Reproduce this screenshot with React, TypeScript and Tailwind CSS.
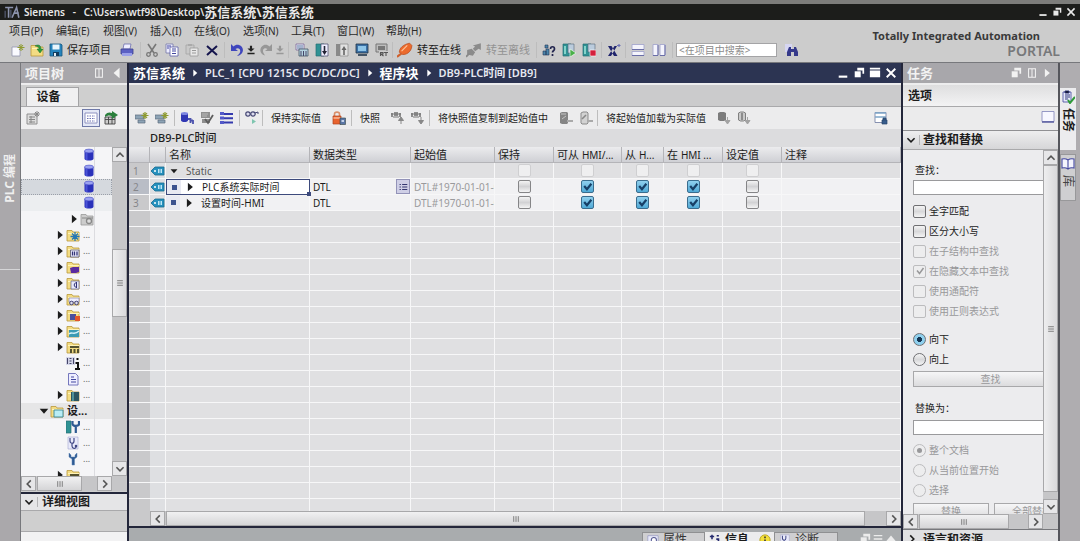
import React, { useState } from "react";

type IconProps = { name: string; className?: string };

const folder = (
  <>
    <path d="M1 2.500h5l1 1.500h6v9H1z" fill="#f3dc83" stroke="#b9983a" strokeWidth=".8" />
    <path d="M2 5.500h11" stroke="#fff3b8" />
  </>
);
const snapshot = (
  <>
    <path d="M0 2h2v4H0zM3 1h4v4H3zM8 2h2v4H8z" fill="#8f8f8f" />
    <path d="M0 3h10M2 6h6" stroke="#777" />
  </>
);
const teal = <path d="M1 1h8v12H1z" fill="#2f9294" stroke="#256d74" strokeWidth=".7" />;

const drawings: Record<string, React.ReactNode> = {
  logo: (
    <>
      <path d="M1 3h7M4 3v9M7 12l4-9 2 9M9 8h4" stroke="#8c93ad" strokeWidth="1.400" fill="none" />
      <path d="M1 12V6M6 5v7" stroke="#596078" />
    </>
  ),
  newFile: (
    <>
      <path d="M1 4h8v9H1z" fill="#fafaff" stroke="#9396ad" strokeWidth=".8" />
      <path d="M10 1v7M6.500 4.500h7M8 2l4 5M12 2L8 7" stroke="#8e9b2f" strokeWidth="1" />
    </>
  ),
  open: (
    <>
      {folder}
      <path d="M5 3c3-2 6-1 6 3h2l-3 4-3-4h2c0-2-1-3-4-3z" fill="#2d9b3c" stroke="#1b6e2a" strokeWidth=".5" />
    </>
  ),
  save: (
    <>
      <path d="M1 1h11l1 1v11H1z" fill="#2684bd" stroke="#15567f" strokeWidth=".8" />
      <path d="M3.500 1.500h7v5h-7z" fill="#e9f5fc" />
      <path d="M4 9h6v4H4z" fill="#123c5e" />
      <path d="M5 10h2v3H5z" fill="#dfeaf2" />
    </>
  ),
  print: (
    <>
      <path d="M4 1h7l-1 5H3z" fill="#eef" stroke="#6d6fae" strokeWidth=".8" />
      <path d="M1 6h12v5H1z" fill="#5b60c4" stroke="#3d4190" strokeWidth=".8" />
      <path d="M2 10h10v3H2z" fill="#9aa0e8" />
    </>
  ),
  cut: (
    <>
      <path d="M3 1l6 9M11 1L5 10" stroke="#777" strokeWidth="1.600" />
      <circle cx="3.500" cy="11.500" r="1.800" fill="none" stroke="#777" strokeWidth="1.300" />
      <circle cx="10.500" cy="11.500" r="1.800" fill="none" stroke="#777" strokeWidth="1.300" />
    </>
  ),
  copy: (
    <>
      <path d="M1 1h7v9H1z" fill="#eef" stroke="#7477a8" strokeWidth=".8" />
      <path d="M5 4h8v9H5z" fill="#fff" stroke="#5a5da8" strokeWidth=".8" />
      <path d="M2 3h4M2 5h2M7 6h4M7 8h4M7 10.500h4" stroke="#4347a0" />
    </>
  ),
  paste: (
    <>
      <path d="M1 2h8v9H1z" fill="#c9c9c9" stroke="#a5a5a5" strokeWidth=".8" />
      <path d="M5 5h8v8H5z" fill="#e7e7e7" stroke="#999" strokeWidth=".8" />
      <path d="M7 7.500h4M7 10h4M3 2h4" stroke="#999" />
    </>
  ),
  del: <path d="M2 3l10 9M12 3L2 12" stroke="#15154d" strokeWidth="2" />,
  undo: <path d="M1 1v7h7L5.500 6C9 4 12 7 9 11l-2 2c7-1 8-9 2-11-2-.5-4 0-5.500 1.500z" fill="#3f46bd" />,
  redo: <path d="M13 1v7H6l2.500-2C5 4 3 7 4.500 10L6 12.500C0 11 0 4 5 2c2-.5 4 0 5.500 1.500z" fill="#979797" />,
  drop: <path d="M2 5h10L7 9.500zM2 11h10v2H2zM5.500 1h3v5h-3z" fill="#222" />,
  dropGray: <path d="M2 5h10L7 9.500zM2 11h10v2H2zM5.500 1h3v5h-3z" fill="#999" />,
  compile: (
    <>
      <path d="M1 1h8v6H1z" fill="#dfe9f0" stroke="#648" strokeWidth=".6" />
      <path d="M2 3h6M2 5h6" stroke="#6a7cab" />
      <path d="M4 6h9v7H4z" fill="#b4d2e0" stroke="#456" strokeWidth=".8" />
      <path d="M6 8v5M8.500 8v5M11 8v5" stroke="#446" />
    </>
  ),
  download: (
    <>
      {teal}
      <path d="M6 1h7v12H6z" fill="#eef" stroke="#446" strokeWidth=".7" />
      <path d="M9.500 3v6" stroke="#223" strokeWidth="1.600" />
      <path d="M7 8h5l-2.500 4z" fill="#223" />
    </>
  ),
  upload: (
    <>
      <path d="M1 1h8v12H1z" fill="#8a8a8a" />
      <path d="M5 1h8v12H5z" fill="#e1e1e1" stroke="#888" strokeWidth=".7" />
      <path d="M9 6v6" stroke="#666" strokeWidth="1.600" />
      <path d="M6.500 7L9 3l2.500 4z" fill="#666" />
    </>
  ),
  sim: (
    <>
      <path d="M1 1h12v9H1z" fill="#3b71a6" stroke="#234" strokeWidth=".8" />
      <path d="M3 3h8v5H3z" fill="#8ec5e8" />
      <path d="M3 12h9" stroke="#456" strokeWidth="2" />
    </>
  ),
  rt: (
    <>
      <path d="M1 1h11v8H1z" fill="#bdbdbd" stroke="#777" />
      <path d="M3 3h7v4H3z" fill="#777" />
      <path d="M4 8h10v6H4z" fill="#ccc" />
      <path d="M5.500 13V9.500H8V11H6l2.500 2M9 9.500h4M11 9.500V13" stroke="#555" strokeWidth="1.100" fill="none" />
    </>
  ),
  online: (
    <>
      <path d="M2 9c0-4 4-7 9-8l2 2c0 4-3 8-8 8z" fill="#ec6a2c" stroke="#b4481a" strokeWidth=".6" />
      <path d="M4 8l5-5" stroke="#ffc59a" />
      <path d="M0 13l4-3" stroke="#d0602c" strokeWidth="1.800" />
    </>
  ),
  offline: (
    <>
      <path d="M6 3l7-2v6l-2-1-3 2-2-2 2-2zM1 7l4-1 3 3-2 3-5-1z" fill="#8b8b8b" />
      <path d="M0 13l3-3" stroke="#888" strokeWidth="1.600" />
    </>
  ),
  access: (
    <>
      <path d="M1 12V8h3v4zM4 6h3v6H4zM3 2h3v3H3z" fill="#4b86ac" stroke="#235" strokeWidth=".6" />
      <path d="M8.500 6c0-3 4-3 4 0 0 2-2 1.500-2 3.500M10.500 11v2" stroke="#23264f" strokeWidth="1.700" fill="none" />
    </>
  ),
  startCpu: (
    <>
      {teal}
      <path d="M6 1h6v9H6z" fill="#bcd" stroke="#567" strokeWidth=".6" />
      <path d="M3 3v8" stroke="#bfe" strokeWidth="1.200" />
      <path d="M8 6l6 4-6 4z" fill="#49b049" stroke="#fff" strokeWidth=".6" />
    </>
  ),
  stopCpu: (
    <>
      {teal}
      <path d="M6 1h7v8H6z" fill="#bcd" stroke="#567" strokeWidth=".6" />
      <path d="M3 3v8" stroke="#bfe" strokeWidth="1.200" />
      <path d="M8 7h6v6H8z" fill="#d4203c" stroke="#fff" strokeWidth=".6" />
    </>
  ),
  cross: (
    <>
      <path d="M1 3h3.500l6 10H7zM10 3H7.500L1 13h3z" fill="#20246d" />
      <path d="M10 2.500h3.500M12 1v3" stroke="#6a6fb5" strokeWidth="1.200" />
    </>
  ),
  splitH: (
    <>
      <path d="M1 1.500h12v5H1zM1 8.500h12v4H1z" fill="#f4f4fc" stroke="#a5a7cd" strokeWidth=".9" />
      <path d="M1 6.500h12M1 12.500h12" stroke="#6a6ea8" />
    </>
  ),
  splitV: (
    <>
      <path d="M1 1.500h5v11H1zM8 1.500h5v11H8z" fill="#f4f4fc" stroke="#a5a7cd" strokeWidth=".9" />
      <path d="M1 12.500h5M8 12.500h5M6 2v10M13 2v10" stroke="#6a6ea8" />
    </>
  ),
  binoculars: (
    <>
      <path d="M0 1h7v8H0z" fill="#d6d6f2" />
      <path d="M4 4h2v2h3V4h2l2 5v4H9V9H6v4H2V9z" fill="#35398a" />
    </>
  ),
  addRow: (
    <>
      <path d="M0 4h9v4H0zM3 9h7v3H3z" fill="#8da3b5" stroke="#5b6c7d" strokeWidth=".7" />
      <path d="M10 1v7M6.500 4.500h7M8 2l4 5M12 2L8 7" stroke="#8e9b2f" strokeWidth="1.200" />
    </>
  ),
  keep: (
    <>
      <path d="M1 2.500v7c1 2 6 2 7 0v-7z" fill="#3138b4" />
      <ellipse cx="4.500" cy="2.500" rx="3.500" ry="1.500" fill="#7d86e0" />
      <path d="M8 8h2.500v4M13 9v4M9.500 9.500H13" stroke="#4b52ad" strokeWidth="1.800" fill="none" />
    </>
  ),
  reset: (
    <>
      <path d="M1 1h9v6H1zM2 8h8v4H2z" fill="#8f8f8f" />
      <path d="M2 3h6M2 5h5" stroke="#c4c4c4" strokeWidth=".8" />
      <path d="M5 8l3 4 5-8" stroke="#5e5e5e" strokeWidth="1.800" fill="none" />
    </>
  ),
  bars: (
    <>
      <path d="M0 1h4v3H0zM0 5.500h4v3H0zM0 10h4v3H0z" fill="#5259c9" />
      <path d="M4 3h9M4 7.200h9M4 11.500h9" stroke="#343aae" strokeWidth="2" />
    </>
  ),
  glasses: (
    <>
      <circle cx="3" cy="3" r="2.200" fill="#dde" stroke="#444673" strokeWidth="1.200" />
      <circle cx="8" cy="3" r="2.200" fill="#dde" stroke="#444673" strokeWidth="1.200" />
      <path d="M10 2l3-1v2" stroke="#444673" fill="none" />
      <path d="M7 8l4 2.500L7 13z" fill="#7fc6b0" />
    </>
  ),
  lock: (
    <>
      <path d="M2.500 6V3c0-2.500 5-2.500 5 0v3" stroke="#d98f6a" strokeWidth="1.600" fill="none" />
      <path d="M1 5h8v8H1z" fill="#e8632f" stroke="#b0421c" strokeWidth=".7" />
      <path d="M1.500 6h7v2h-7z" fill="#f6a27c" />
      <path d="M8 7h5.500v6.500H8z" fill="#5a76a6" stroke="#344" strokeWidth=".6" />
      <path d="M9.500 9h2.500v2H9.500z" fill="#c4d2ea" />
    </>
  ),
  snapUp: (
    <>
      {snapshot}
      <path d="M10 13V8M7.500 9.500L10 6l2.500 3.500z" stroke="#888" fill="#888" />
    </>
  ),
  snapDown: (
    <>
      {snapshot}
      <path d="M10 6v4M7.500 9.500L10 13l2.500-3.500z" stroke="#888" fill="#888" />
    </>
  ),
  dbCopy: (
    <>
      <path d="M1 2l2-1h5l1 1v10l-1 1H3l-2-1z" fill="#858585" />
      <path d="M2 3h5M3 8l4-3" stroke="#c4c4c4" />
      <path d="M8 10h6" stroke="#aaa" strokeWidth="2" />
    </>
  ),
  dbCopyAlt: (
    <>
      <path d="M2 2l2-1h4l1 1v10l-1 1H3l-1-1z" fill="#d2d2d2" stroke="#8b8b8b" />
      <path d="M3 8l4-4" stroke="#888" strokeWidth="1.600" />
      <path d="M8 10h6" stroke="#aaa" strokeWidth="2" />
    </>
  ),
  dbLoad: (
    <>
      <path d="M1 2l2-1h4l2 1v7l-2 1H3L1 9z" fill="#7c7c7c" />
      <path d="M10.500 6v4M8 9.500l2.500 3.500L13 9.500z" stroke="#a3a3a3" fill="#a3a3a3" />
    </>
  ),
  dbLoadAlt: (
    <>
      <path d="M1.500 2l2-1h3l2 1v7l-2 1h-3l-2-1z" fill="#c9c9c9" stroke="#808080" />
      <path d="M5 2v7" stroke="#777" strokeWidth="1.500" />
      <path d="M10.500 6v4M8 9.500l2.500 3.500L13 9.500z" stroke="#a3a3a3" fill="#a3a3a3" />
    </>
  ),
  layout: (
    <>
      <path d="M1 1.500h11v10H1z" fill="#fff" stroke="#7a86a8" strokeWidth=".9" />
      <path d="M1 2h11M1 6h11" stroke="#7fa6c9" strokeWidth="1.500" />
      <path d="M8 9h5v4H8zM9 9V7h3v2" fill="#375c8c" stroke="#28456b" strokeWidth=".7" />
    </>
  ),
  pane: (
    <>
      <path d="M1 1.500h12v10H1z" fill="#f7f7ff" stroke="#8a8dc0" strokeWidth=".9" />
      <path d="M1 12h12" stroke="#5a5ea0" strokeWidth="1.500" />
    </>
  ),
  treeNew: (
    <>
      <path d="M1 3h10v10H1z" fill="#ddd" stroke="#888" strokeWidth=".9" />
      <path d="M3 6h6M3 8.500h6M3 11h6M5 5v7M11 0v6M8 3h6M9 1l4 4M13 1L9 5" stroke="#888" />
    </>
  ),
  grid: (
    <>
      <path d="M1 2h12v10H1z" fill="#fff" stroke="#8488ba" strokeWidth=".9" />
      <path d="M3 5h8M3 7.500h8M3 10h8" stroke="#6a70b4" strokeDasharray="1.500 1" />
    </>
  ),
  goto: (
    <>
      <path d="M1 6h10v7H1z" fill="#ccc" stroke="#444" strokeWidth=".9" />
      <path d="M1 8.500h10M4.500 6v7M8 6v7" stroke="#444" strokeWidth=".9" />
      <path d="M1 4c2-3 5-3 7-2V0l6 4-6 4V5.500C6 4 4 4 1 6z" fill="#2b7f3c" />
    </>
  ),
  db: (
    <>
      <path d="M2.500 3v8c1 2 8 2 9 0V3z" fill="#2a31ba" />
      <path d="M4.500 4v8" stroke="#4a53d6" strokeWidth="2" />
      <ellipse cx="7" cy="3" rx="4.500" ry="1.900" fill="#9aa1f0" stroke="#444bc4" strokeWidth=".6" />
    </>
  ),
  folderGray: (
    <>
      <path d="M1 2.500h5l1 1.500h6v9H1z" fill="#ccc" stroke="#999" strokeWidth=".8" />
      <circle cx="9" cy="9" r="2.500" fill="#ddd" stroke="#888" strokeWidth="1.300" />
      <path d="M2 6h11" stroke="#888" />
    </>
  ),
  folderStar: (
    <>
      {folder}
      <path d="M9 4v9M4.500 8.500h9M6 5.500l6 6M12 5.500l-6 6" stroke="#2677b4" strokeWidth="1.300" />
    </>
  ),
  folderBlocks: (
    <>
      {folder}
      <path d="M4.500 6H13v7H4.500z" fill="#eef" stroke="#446" strokeWidth=".7" />
      <path d="M6.500 7.500v4M8.500 7.500v4M11 7.500v4" stroke="#337" strokeWidth="1.300" />
    </>
  ),
  folderPurple: (
    <>
      {folder}
      <path d="M4 8l3-1h6v5l-3 1H5z" fill="#5a2ba0" />
    </>
  ),
  folderClass: (
    <>
      {folder}
      <path d="M5 5h8v8H5z" fill="#e6e8fa" stroke="#668" strokeWidth=".7" />
      <path d="M10.500 7c-3-1-3 5 0 4M10.500 6v6" stroke="#337" fill="none" />
    </>
  ),
  folderWatch: (
    <>
      {folder}
      <path d="M3 6h10v4H3z" fill="#eef" stroke="#77a" strokeWidth=".6" />
      <circle cx="5.500" cy="11" r="1.800" fill="#dde" stroke="#447" />
      <circle cx="10.500" cy="11" r="1.800" fill="#dde" stroke="#447" />
    </>
  ),
  folderRed: (
    <>
      {folder}
      <path d="M4 6h6v6H4z" fill="#4a4f9d" />
      <path d="M9 8h5v5H9z" fill="#e2552a" />
    </>
  ),
  folderTrace: (
    <>
      {folder}
      <path d="M3 6h10v7H3z" fill="#3c9bb4" />
      <path d="M3 10c3-3 5 2 10-3" stroke="#d8f3fb" strokeWidth="1.400" fill="none" />
    </>
  ),
  folderDevice: (
    <>
      {folder}
      <path d="M4 6h9v2H4zM4 9h2v4H4zM7.500 9h2v4h-2zM11 9h2v4h-2z" fill="#555230" />
    </>
  ),
  info: (
    <>
      <path d="M0 1h9v8H0z" fill="#d5d7ea" />
      <path d="M1.500 2v6M3.500 2.500h2M3.500 5h2M3.500 7.500h2M7.500 2v6" stroke="#446" strokeWidth="1.100" />
      <path d="M10.500 3h2M9.500 7h2.500v5M9 13h5" stroke="#111" strokeWidth="2" fill="none" />
    </>
  ),
  textList: (
    <>
      <path d="M2.500 1.500h7l2.500 2.500v9H2.500z" fill="#eef" stroke="#6669b5" strokeWidth=".9" />
      <path d="M5 5h3M5 7.500h5M5 10h5" stroke="#4347a0" strokeWidth="1.200" />
    </>
  ),
  folderModule: (
    <>
      {folder}
      <path d="M5 4h8v9H5z" fill="#2c5660" />
      <path d="M7 4v9" stroke="#59a2a8" strokeWidth="1.600" />
    </>
  ),
  folderScreen: (
    <>
      {folder}
      <path d="M4 6h9v7H4z" fill="#b9edf5" stroke="#388695" strokeWidth=".9" />
    </>
  ),
  deviceCfg: (
    <>
      <path d="M0 1h5v12H0z" fill="#2f9294" stroke="#256d74" strokeWidth=".7" />
      <path d="M6.500 1v3c0 2.500 6.500 2.500 6.500 0V1M9.800 5v8" stroke="#2e5a92" strokeWidth="2.200" fill="none" />
    </>
  ),
  diag: (
    <>
      <path d="M2 1h10v12H2z" fill="#e9eafa" stroke="#a2a5d0" strokeWidth=".6" />
      <path d="M4 2v3c0 3 4 3 4 0V2M6 7v3c0 3 4 3 4 1" stroke="#404785" strokeWidth="1.200" fill="none" />
      <circle cx="10" cy="10" r="1.300" fill="#404785" />
    </>
  ),
  wrench: <path d="M3 1v4l3 2v6h2.500V7L11 5V1L9 3v2H5V3z" fill="#2e5a92" stroke="#5d84b4" strokeWidth=".5" />,
  tag: (
    <>
      <path d="M0 7l4-4h9v8H4z" fill="#2690bd" stroke="#176b91" strokeWidth=".8" />
      <circle cx="4" cy="7" r="1" fill="#fff" />
      <path d="M7 5h4v4H7z" fill="#bfe6f5" />
      <path d="M9 5v4" stroke="#2690bd" />
    </>
  ),
  list: (
    <>
      <path d="M6 4h6M6 7h6M6 10h6" stroke="#34366f" strokeWidth="1.200" />
      <path d="M3 4h1.500M3 7h1.500M3 10h1.500" stroke="#34366f" strokeWidth="1.200" />
    </>
  ),
  taskList: (
    <>
      <path d="M2 2h8v10H2z" fill="#e6e8fa" stroke="#5257a4" strokeWidth=".9" />
      <path d="M4 1h4v2H4zM4 5h5M4 7h5M4 9h3" stroke="#33387e" />
      <path d="M7 10l2 3 5-6" stroke="#2f9b3a" strokeWidth="2" fill="none" />
    </>
  ),
  book: (
    <path d="M7 3c-2-1.500-4-1.500-6-1v9c2-.5 4-.5 6 1 2-1.500 4-1.500 6-1V2c-2-.5-4-.5-6 1zm0 0v9" fill="#f4f4fd" stroke="#4448a0" strokeWidth="1.100" />
  ),
  props: (
    <>
      <path d="M1 2h12v11H1z" fill="#e9eafa" stroke="#8a8dc0" strokeWidth=".7" />
      <circle cx="8" cy="7" r="3" fill="#fff" stroke="#55598f" strokeWidth="1.200" />
      <path d="M1 12l4-3" stroke="#55598f" strokeWidth="1.300" />
    </>
  ),
  infoMark: (
    <>
      <path d="M1 3h5M3.500 1v5M9 2h2.500" stroke="#252a6e" strokeWidth="1.800" />
      <path d="M8.500 6H11v6M8 12.500h5" stroke="#252a6e" strokeWidth="2" fill="none" />
    </>
  ),
  infoYellow: (
    <>
      <circle cx="7" cy="7" r="6" fill="#f3df3a" stroke="#b5a321" />
      <path d="M7 3v2M7 6.500V11" stroke="#333" strokeWidth="1.800" />
    </>
  ),
  min: <path d="M2 10h10v2.500H2z" fill="currentColor" />,
  restore: (
    <>
      <path d="M5 1h8v7h-2V4H5z" fill="currentColor" />
      <path d="M2 5h7v7H2z" fill="currentColor" />
    </>
  ),
  max: <path d="M1 1h12v2H1zM1 4.200h12V12H1z" fill="currentColor" />,
  close: <path d="M2 2l10 10M12 2L2 12" stroke="currentColor" strokeWidth="2.200" />,
  pinned: <path d="M3 2h8v10H3zM7 2v10" fill="none" stroke="currentColor" strokeWidth="1.200" />,
  lines: <path d="M2 3h10M2 7h10M2 11h10" stroke="currentColor" strokeWidth="1.600" />,
  triL: <path d="M10 1v12L3 7z" fill="currentColor" />,
  triR: <path d="M4 1v12l7-6z" fill="currentColor" />,
  triD: <path d="M1 4h12L7 11z" fill="currentColor" />,
  triU: <path d="M1 10h12L7 3z" fill="currentColor" />,
  chevL: <path d="M9.500 2L4.500 7l5 5" stroke="currentColor" strokeWidth="2.200" fill="none" />,
  chevR: <path d="M4.500 2l5 5-5 5" stroke="currentColor" strokeWidth="2.200" fill="none" />,
  chevU: <path d="M2 9.500l5-5 5 5" stroke="currentColor" strokeWidth="2.200" fill="none" />,
  chevD: <path d="M2 4.500l5 5 5-5" stroke="currentColor" strokeWidth="2.200" fill="none" />,
};

function Icon({ name, className = "size-3.5" }: IconProps) {
  return (
    <svg viewBox="0 0 14 14" className={`block shrink-0 ${className}`} aria-hidden="true">
      {drawings[name]}
    </svg>
  );
}

function Tool({ icon, label, className = "w-5" }: { icon: string; label: string; className?: string }) {
  return (
    <button type="button" aria-label={label} className={`flex shrink-0 items-center justify-center ${className}`}>
      <Icon name={icon} />
    </button>
  );
}

function Sep({ className = "mx-1" }: { className?: string }) {
  return <div className={`h-4 w-px shrink-0 bg-[#bdbdbd] ${className}`} />;
}

const arrowBox = "flex size-[15px] shrink-0 items-center justify-center border border-[#a8a8aa] bg-[#e6e6e8] text-[#555]";

function HScroll({ thumb }: { thumb: string }) {
  return (
    <div className="flex h-[15px] shrink-0 bg-[#c6c6c8]">
      <button type="button" aria-label="向左滚动" className={arrowBox}><Icon name="chevL" className="size-2.5" /></button>
      <div className="flex min-w-0 flex-1">
        <div className={`ml-px flex items-center justify-center border border-[#a8a8aa] bg-linear-to-b from-[#f1f1f2] to-[#d5d5d7] text-[#777] ${thumb}`}>
          <Icon name="lines" className="size-2 rotate-90" />
        </div>
      </div>
      <button type="button" aria-label="向右滚动" className={arrowBox}><Icon name="chevR" className="size-2.5" /></button>
    </div>
  );
}

function VScroll({ before, thumb }: { before: string; thumb: string }) {
  return (
    <div className="flex w-[15px] shrink-0 flex-col bg-[#c6c6c8]">
      <button type="button" aria-label="向上滚动" className={arrowBox}><Icon name="chevU" className="size-2.5" /></button>
      <div className="flex min-h-0 flex-1 flex-col">
        <div className={before} />
        <div className={`flex items-center justify-center border border-[#a8a8aa] bg-linear-to-r from-[#eeeeef] to-[#d9d9db] text-[#777] ${thumb}`}>
          <Icon name="lines" className="size-2" />
        </div>
      </div>
      <button type="button" aria-label="向下滚动" className={arrowBox}><Icon name="chevD" className="size-2.5" /></button>
    </div>
  );
}

const menus: [string, string, string][] = [
  ["项目", "(P)", "w-[47px]"],
  ["编辑", "(E)", "w-[47px]"],
  ["视图", "(V)", "w-[47px]"],
  ["插入", "(I)", "w-11"],
  ["在线", "(O)", "w-[49px]"],
  ["选项", "(N)", "w-12"],
  ["工具", "(T)", "w-[46px]"],
  ["窗口", "(W)", "w-[49px]"],
  ["帮助", "(H)", "w-[47px]"],
];

function Header() {
  return (
    <header className="shrink-0 border-b border-[#77787c] bg-[#cccccc]">
      <div className="flex justify-between">
        <div className="min-w-0">
          <nav className="flex h-[21px] items-center pl-[9px]">
            {menus.map(([t, k, w]) => (
              <button type="button" key={t} className={`shrink-0 text-left whitespace-nowrap text-[#2a2a2a] ${w}`}>
                {t}<span className="text-[10px]">{k}</span>
              </button>
            ))}
          </nav>
          <div className="flex h-[21px] items-center pb-1 pl-2">
            <Tool icon="newFile" label="新建项目" className="w-[19px]" />
            <Tool icon="open" label="打开项目" className="w-[19px]" />
            <button type="button" className="flex shrink-0 items-center gap-1 pl-[3px] whitespace-nowrap">
              <Icon name="save" />保存项目
            </button>
            <Tool icon="print" label="打印" className="ml-1.5 w-5" />
            <Sep className="ml-[3px]" />
            <Tool icon="cut" label="剪切" className="w-[21px]" />
            <Tool icon="copy" label="复制" />
            <Tool icon="paste" label="粘贴" />
            <Tool icon="del" label="删除" />
            <Sep className="mx-0.5" />
            <Tool icon="undo" label="撤消" className="w-[19px]" />
            <button type="button" aria-label="撤消列表" className="w-2.5"><Icon name="drop" className="size-2.5" /></button>
            <Tool icon="redo" label="重做" className="w-[19px]" />
            <button type="button" aria-label="重做列表" className="w-2.5"><Icon name="dropGray" className="size-2.5" /></button>
            <Sep className="mx-[3px]" />
            <Tool icon="compile" label="编译" />
            <Tool icon="download" label="下载" />
            <Tool icon="upload" label="上传" />
            <Tool icon="sim" label="启动仿真" />
            <Tool icon="rt" label="启动运行系统" />
            <Sep className="mr-px" />
            <button type="button" className="flex shrink-0 items-center gap-1 pl-[3px] whitespace-nowrap"><Icon name="online" className="size-4" />转至在线</button>
            <button type="button" className="flex shrink-0 items-center gap-1 pl-[5px] whitespace-nowrap text-[#939393]"><Icon name="offline" className="size-4" />转至离线</button>
            <Sep className="mr-0.5 ml-[6px]" />
            <Tool icon="access" label="可访问的设备" />
            <Tool icon="startCpu" label="启动 CPU" />
            <Tool icon="stopCpu" label="停止 CPU" />
            <Sep className="mx-0.5" />
            <Tool icon="cross" label="交叉引用" />
            <Sep className="mx-px" />
            <Tool icon="splitH" label="水平拆分" className="w-[21px]" />
            <Tool icon="splitV" label="垂直拆分" className="w-[21px]" />
            <Sep className="mx-[3px]" />
            <input aria-label="在项目中搜索" placeholder="<在项目中搜索>" className="h-3.5 w-[101px] shrink-0 border border-[#a4a4a6] bg-white pl-0.5 text-[10px] placeholder:text-[#8b8b8b]" />
            <Tool icon="binoculars" label="搜索" className="ml-[5px] w-5" />
          </div>
        </div>
        <div className="flex shrink-0 flex-col items-end pt-2 pr-5">
          <div className="mr-5 text-[11px] leading-[16px] font-bold whitespace-nowrap text-[#3a3a3a]">Totally Integrated Automation</div>
          <div className="text-[14px] leading-[14px] font-semibold text-[#77787a]">PORTAL</div>
        </div>
      </div>
    </header>
  );
}

type TreeRow = { icon: string; indent: string; arrow?: string; text?: string; tone?: string; strong?: boolean };

const treeRows: TreeRow[] = [
  { icon: "db", indent: "pl-[61px]" },
  { icon: "db", indent: "pl-[61px]" },
  { icon: "db", indent: "pl-[61px]", tone: "bg-[#d5d9de] outline-1 -outline-offset-1 outline-dotted outline-[#9a9fa8]" },
  { icon: "db", indent: "pl-[61px]", tone: "bg-[#eceef0]" },
  { icon: "folderGray", indent: "pl-12", arrow: "triR" },
  { icon: "folderStar", indent: "pl-[34px]", arrow: "triR", text: "..." },
  { icon: "folderBlocks", indent: "pl-[34px]", arrow: "triR", text: "..." },
  { icon: "folderPurple", indent: "pl-[34px]", arrow: "triR", text: "..." },
  { icon: "folderClass", indent: "pl-[34px]", arrow: "triR", text: "..." },
  { icon: "folderWatch", indent: "pl-[34px]", arrow: "triR", text: "..." },
  { icon: "folderRed", indent: "pl-[34px]", arrow: "triR", text: "..." },
  { icon: "folderTrace", indent: "pl-[34px]", arrow: "triR", text: "..." },
  { icon: "folderDevice", indent: "pl-[34px]", arrow: "triR", text: "..." },
  { icon: "info", indent: "pl-[45px]", text: "..." },
  { icon: "textList", indent: "pl-[45px]", text: "..." },
  { icon: "folderModule", indent: "pl-[34px]", arrow: "triR", text: "..." },
  { icon: "folderScreen", indent: "pl-[18px]", arrow: "triD", text: "设...", tone: "bg-[#e6e6e7]", strong: true },
  { icon: "deviceCfg", indent: "pl-[45px]", text: "..." },
  { icon: "diag", indent: "pl-[45px]", text: "..." },
  { icon: "wrench", indent: "pl-[45px]", text: "..." },
  { icon: "folderDevice", indent: "pl-[34px]", arrow: "triR", text: "..." },
];

const sideTitle = "flex h-5 shrink-0 items-center bg-[#a8a7ab] text-[13px] font-bold text-[#f2f2f2]";

function ProjectTree() {
  return (
    <aside className="flex w-[109px] shrink-0 flex-col border-r-2 border-l border-r-[#23263a] border-l-[#77787c] bg-[#cfcfcf]">
      <div className={`${sideTitle} pr-1 pl-1`}>
        <h2 className="flex-1">项目树</h2>
        <button type="button" aria-label="自动折叠"><Icon name="pinned" className="size-3" /></button>
        <button type="button" aria-label="折叠" className="ml-1.5"><Icon name="triL" className="size-3" /></button>
      </div>
      <div className="flex h-6 shrink-0 items-end border-t-2 border-b border-t-[#ededee] border-b-[#a9a9ab] pl-[5px]">
        <button type="button" className="h-[19px] w-[53px] border border-b-0 border-[#a3a3a5] bg-[#f0f0f1] pr-2 text-[12px] font-bold">设备</button>
      </div>
      <div className="flex h-[22px] shrink-0 items-center bg-[#efeff0] pl-1">
        <Tool icon="treeNew" label="添加新设备" className="w-4" />
        <button type="button" aria-label="显示列" className="ml-[41px] flex size-[18px] items-center justify-center border border-[#6f79a8] bg-[#e4e8f6]"><Icon name="grid" /></button>
        <Tool icon="goto" label="在编辑器中显示" className="ml-px w-5" />
      </div>
      <div className="h-[18px] shrink-0 bg-[#c5c5c7]" />
      <div className="flex min-h-0 flex-1">
        <ul className="min-w-0 flex-1 overflow-hidden bg-[#f5f5f7]">
          {treeRows.map((r, i) => (
            <li key={i} className={`flex h-4 ${r.tone ?? ""}`}>
              <div className={`flex w-[74px] shrink-0 items-center gap-px border-r border-[#dcdce0] ${r.indent}`}>
                {r.arrow && <Icon name={r.arrow} className="size-2.5" />}
                <Icon name={r.icon} />
                {r.text && <span className={r.strong ? "pl-0.5 font-bold" : "pl-0.5 text-[9px] text-[#666]"}>{r.text}</span>}
              </div>
            </li>
          ))}
        </ul>
        <VScroll before="h-[29%]" thumb="h-[23%]" />
      </div>
      <div className="flex h-[15px] shrink-0 bg-[#c6c6c8]">
        <div className="min-w-0 flex-1"><HScroll thumb="w-[74%]" /></div>
        <div className="w-[15px]" />
      </div>
      <div className="mt-px flex h-[19px] shrink-0 items-center border-t-2 border-b border-t-[#23263a] border-b-[#a9a9ab] bg-[#e5e5e7]">
        <button type="button" aria-label="展开详细视图" className="flex w-[17px] justify-center border-r border-[#b5b5b7]"><Icon name="chevD" className="size-2.5" /></button>
        <h2 className="pl-1 text-[12px] font-bold">详细视图</h2>
      </div>
      <div className="h-[21px] shrink-0 border-b border-[#a9a9ab] bg-[#cfcfcf]" />
      <div className="h-[9px] shrink-0 bg-[#f2f2f3]" />
    </aside>
  );
}

function CellCheck({ initial, faint, label }: { initial: boolean; faint?: boolean; label: string }) {
  const [on, setOn] = useState(initial);
  const tone = faint
    ? "border-[#cfcfd1] bg-[#efeff0]"
    : on
      ? "border-[#3a6d8e] bg-linear-to-b from-[#8fd0ee] to-[#4fa9d6]"
      : "border-[#858587] bg-linear-to-b from-[#f4f4f4] via-[#d2d2d4] to-[#f4f4f4]";
  return (
    <label className={`relative mx-auto block size-[13px] rounded-[2px] border ${tone}`}>
      <input type="checkbox" aria-label={label} disabled={faint} checked={on} onChange={() => setOn(!on)} className="absolute inset-0 m-0 size-full appearance-none" />
      {on && <svg viewBox="0 0 10 10" className="size-[11px]"><path d="M2 4.500l2.500 3L8.500 2.500" fill="none" stroke="#173f66" strokeWidth="2" /></svg>}
    </label>
  );
}

const columns = ["名称", "数据类型", "起始值", "保持", "可从 HMI/...", "从 H...", "在 HMI ...", "设定值", "注释"];
const flags = [false, true, true, true, false];

const rows = [
  { name: "Static", type: "", start: "", root: true },
  { name: "PLC系统实际时间", type: "DTL", start: "DTL#1970-01-01-00:00:00", root: false },
  { name: "设置时间-HMI", type: "DTL", start: "DTL#1970-01-01-00:00:00", root: false },
];

const cell = "h-4 overflow-hidden border-r border-b border-[#f7f7f8] p-0 whitespace-nowrap";

function DataTable() {
  return (
    <table className="w-full table-fixed border-separate border-spacing-0">
      <colgroup>
        <col className="w-[21px]" /><col className="w-4" /><col className="w-36" /><col className="w-[101px]" /><col className="w-[84px]" />
        <col className="w-[59px]" /><col className="w-[68px]" /><col className="w-[42px]" /><col className="w-[59px]" /><col className="w-[59px]" /><col />
      </colgroup>
      <thead>
        <tr className="bg-linear-to-b from-[#ececee] to-[#cdced3]">
          {["", "", ...columns].map((c, i) => (
            <th key={i} scope="col" className="h-4 overflow-hidden border-r border-b border-[#b4b4b8] p-0 pl-[3px] text-left font-normal whitespace-nowrap">
              {c.split(/(HMI.*|H\.\.\.)/).map((p, j) => (j % 2 ? <span key={j} className="text-[10px]">{p}</span> : p))}
            </th>
          ))}
        </tr>
      </thead>
      <tbody>
        {rows.map((r, i) => (
          <tr key={r.name} className={r.root ? "bg-[#e0e0e2]" : "bg-[#f1f1f3]"}>
            <td className={`${cell} pl-1 text-[10px] text-[#86868a] ${i === 1 ? "bg-[#b9bdc6]" : "bg-[#c9c9cb]"}`}>{i + 1}</td>
            <td className={`${cell} bg-[#dedfe2]`}><Icon name="tag" className="ml-px size-3.5" /></td>
            <td className={i === 1 ? "relative h-4 border border-[#3d4a7c] bg-white p-0 whitespace-nowrap" : cell}>
              {r.root ? (
                <div className="flex items-center pl-1"><Icon name="triD" className="size-2" /><span className="pl-2 text-[10px] text-[#555]">{r.name}</span></div>
              ) : (
                <div className="flex h-3.5 items-center">
                  <span className="flex h-full w-3.5 shrink-0 items-center justify-center bg-[#e8e9f2]"><span className="size-[5px] bg-[#3d5390]" /></span>
                  <Icon name="triR" className="ml-1 size-2.5" />
                  <span className="pl-[7px] text-[10px]">{r.name}</span>
                </div>
              )}
              {i === 1 && <span className="absolute -right-0.5 -bottom-0.5 size-1 bg-[#3d4a7c]" />}
            </td>
            <td className={cell}>
              <div className="flex items-center justify-between pl-[3px] text-[10px]">
                {r.type}
                {i === 1 && <button type="button" aria-label="选择数据类型" className="flex h-[15px] w-3.5 items-center justify-center border border-[#9393b8] bg-[#cfcfe6]"><Icon name="list" className="size-3" /></button>}
              </div>
            </td>
            <td className={`${cell} pl-[3px] text-[10px] text-[#9a9a9c]`}>{r.start}</td>
            {flags.map((f, j) => (
              <td key={j} className={cell}><CellCheck initial={f && !r.root} faint={r.root} label={`${r.name} ${columns[j + 3]}`} /></td>
            ))}
            <td className={cell} />
          </tr>
        ))}
        {Array.from({ length: 40 }, (_, i) => (
          <tr key={i} className="bg-[#e0e0e2]">
            <td className={`${cell} border-r-0 bg-[#c9c9cb]`} />
            <td className={`${cell} bg-[#dedfe2]`} />
            {columns.map((c) => <td key={c} className={cell} />)}
          </tr>
        ))}
      </tbody>
    </table>
  );
}

const crumbs = ["苏信系统", "PLC_1 [CPU 1215C DC/DC/DC]", "程序块", "DB9-PLC时间 [DB9]"];

function Editor() {
  return (
    <main className="flex min-w-0 flex-1 flex-col bg-[#dcdcde]">
      <div className="flex h-5 shrink-0 items-center bg-[#2c3452] pr-1 pl-1 text-white">
        <div className="flex min-w-0 flex-1 items-center whitespace-nowrap">
          {crumbs.map((c, i) => (
            <React.Fragment key={c}>
              {i > 0 && <Icon name="triR" className="mx-[6px] size-2" />}
              <a href="#" className={i % 2 ? "text-[11px] font-semibold text-[#e6e8f0]" : "text-[13px] font-bold"}>{c}</a>
            </React.Fragment>
          ))}
        </div>
        <div className="flex gap-1">
          <button type="button" aria-label="最小化"><Icon name="min" className="size-3" /></button>
          <button type="button" aria-label="还原"><Icon name="restore" className="size-3" /></button>
          <button type="button" aria-label="最大化"><Icon name="max" className="size-3" /></button>
          <button type="button" aria-label="关闭"><Icon name="close" className="size-3" /></button>
        </div>
      </div>
      <div className="h-6 shrink-0 border-t-2 border-b border-t-[#ededee] border-b-[#a9a9ab] bg-[#cbcbcc]" />
      <div className="flex h-[22px] shrink-0 items-center bg-[#ececed] pl-[3px] text-[10px] whitespace-nowrap">
        <Tool icon="addRow" label="插入行" />
        <Tool icon="addRow" label="添加行" />
        <Sep className="mx-0.5" />
        <Tool icon="keep" label="保持" />
        <Tool icon="reset" label="复位起始值" />
        <Tool icon="bars" label="扩展模式" />
        <Sep className="mx-0.5" />
        <Tool icon="glasses" label="全部监视" />
        <Sep className="mr-2" />
        <button type="button">保持实际值</button>
        <Tool icon="lock" label="锁定" className="ml-2 w-5" />
        <Sep className="mr-2 ml-0.5" />
        <button type="button">快照</button>
        <Tool icon="snapUp" label="上传快照" className="ml-2 w-5" />
        <Tool icon="snapDown" label="下载快照" />
        <Sep className="mr-2 ml-px" />
        <button type="button">将快照值复制到起始值中</button>
        <Tool icon="dbCopy" label="复制全部值" className="ml-2 w-5" />
        <Tool icon="dbCopyAlt" label="复制保持值" />
        <Sep className="mr-2 ml-px" />
        <button type="button">将起始值加载为实际值</button>
        <Tool icon="dbLoad" label="加载全部" className="ml-2 w-5" />
        <Tool icon="dbLoadAlt" label="加载保持" />
        <Tool icon="layout" label="布局" className="mr-2.5 ml-auto w-5" />
      </div>
      <h1 className="h-[18px] shrink-0 pl-[21px] leading-[18px] font-medium">DB9-PLC时间</h1>
      <div className="min-h-0 flex-1 overflow-hidden"><DataTable /></div>
      <div className="shrink-0 border-b-2 border-[#23263a] bg-[#c9c9cb] pl-[21px]"><HScroll thumb="w-[97%]" /></div>
      <div className="flex h-[13px] shrink-0 items-start justify-end overflow-hidden bg-[#a9acae] pt-1 pr-1 leading-[16px] whitespace-nowrap">
        <button type="button" className="flex h-4 w-[63px] shrink-0 items-center gap-1 border border-[#8f9092] bg-[#cfcfd1] pl-1 text-[12px] text-[#333]"><Icon name="props" className="size-3" />属性</button>
        <button type="button" className="flex h-4 w-[69px] shrink-0 items-center gap-1 bg-[#ececed] pl-1 text-[12px] font-bold"><Icon name="infoMark" className="size-3" />信息<Icon name="infoYellow" className="ml-1.5 size-3" /></button>
        <button type="button" className="flex h-4 w-16 shrink-0 items-center gap-1 border border-[#8f9092] bg-[#cfcfd1] pl-1 text-[12px] text-[#333]"><Icon name="diag" className="size-3" />诊断</button>
        <div className="flex gap-px pt-px pl-2 text-[#ececec]">
          <Icon name="min" className="size-3" /><Icon name="restore" className="size-3" /><Icon name="lines" className="size-3" /><Icon name="triU" className="size-3" />
        </div>
      </div>
    </main>
  );
}

function Choice({ type, name, text, off, checked }: { type: "checkbox" | "radio"; name: string; text: string; off?: boolean; checked?: boolean }) {
  const round = type === "radio" ? "rounded-full checked:bg-[radial-gradient(circle,#173652_30%,#8fd0ee_34%)]" : "rounded-[2px]";
  const tone = off
    ? "border-[#bcbcbe] bg-[#ededee] disabled:checked:bg-none"
    : "border-[#6f6f72] bg-linear-to-b from-[#f4f4f4] via-[#d8d8da] to-[#f4f4f4]";
  return (
    <label className={`flex h-5 items-center gap-[3px] text-[10px] whitespace-nowrap ${off ? "text-[#98989a]" : "text-[#222]"}`}>
      <span className="relative flex size-[13px] shrink-0 items-center justify-center">
        <input type={type} name={name} disabled={off} defaultChecked={checked} className={`absolute inset-0 m-0 size-[13px] appearance-none border ${round} ${tone}`} />
        {off && checked && type === "checkbox" && (
          <svg viewBox="0 0 10 10" className="pointer-events-none relative size-2.5"><path d="M2 4.500l2.500 3L8.500 2" fill="none" stroke="#98989a" strokeWidth="1.500" /></svg>
        )}
        {off && checked && type === "radio" && <span className="relative size-[5px] rounded-full bg-[#98989a]" />}
      </span>
      {text}
    </label>
  );
}

const pushButton = "h-4 shrink-0 border border-[#a8a8aa] bg-linear-to-b from-[#f6f6f7] to-[#dcdcde] text-[10px] leading-[14px] text-[#98989a]";

function Tasks() {
  return (
    <aside className="flex w-[159px] shrink-0 flex-col border-x-2 border-l-[#23263a] border-r-[#55565c] bg-[#ececee]">
      <div className={`${sideTitle} pr-1.5 pl-1`}>
        <h2 className="flex-1">任务</h2>
        <Icon name="restore" className="mr-1 size-3" />
        <button type="button" aria-label="自动折叠"><Icon name="pinned" className="size-3" /></button>
        <button type="button" aria-label="折叠" className="ml-1"><Icon name="triR" className="size-2.5" /></button>
      </div>
      <h3 className="h-6 shrink-0 border-t-2 border-b border-t-[#ededee] border-b-[#a9a9ab] bg-linear-to-b from-[#dededf] to-[#f3f3f4] pl-[5px] text-[12px] leading-[21px] font-bold">选项</h3>
      <div className="flex h-6 shrink-0 items-center justify-end border-b border-[#909093] bg-[#ebebec] pr-0.5 pb-1"><Tool icon="pane" label="选项窗格" className="w-4" /></div>
      <div className="flex h-[19px] shrink-0 items-center border-b border-[#a9a9ab] bg-linear-to-b from-[#eeeeef] to-[#d6d6d8]">
        <button type="button" aria-label="折叠查找和替换" className="flex w-[17px] justify-center border-r border-[#b5b5b7]"><Icon name="chevD" className="size-2.5" /></button>
        <h3 className="pl-[3px] text-[12px] font-bold">查找和替换</h3>
      </div>
      <div className="flex min-h-0 flex-1">
        <form className="flex min-w-0 flex-1 flex-col overflow-hidden pl-2.5" onSubmit={(e) => e.preventDefault()}>
          <label htmlFor="find" className="mt-3 mb-px h-[17px] shrink-0 pl-0.5 text-[10px] leading-[17px]">查找：</label>
          <input id="find" className="h-[15px] shrink-0 border border-r-0 border-[#9a9a9c] bg-white px-1" />
          <div className="shrink-0 pt-1.5">
            <Choice type="checkbox" name="whole" text="全字匹配" />
            <Choice type="checkbox" name="case" text="区分大小写" />
            <Choice type="checkbox" name="sub" text="在子结构中查找" off />
            <Choice type="checkbox" name="hidden" text="在隐藏文本中查找" off checked />
            <Choice type="checkbox" name="wild" text="使用通配符" off />
            <Choice type="checkbox" name="regex" text="使用正则表达式" off />
          </div>
          <div className="shrink-0 pt-2 pb-0.5">
            <Choice type="radio" name="dir" text="向下" checked />
            <Choice type="radio" name="dir" text="向上" />
          </div>
          <button type="submit" className={`${pushButton} border-r-0 pl-6`}>查找</button>
          <label htmlFor="replace" className="mt-[13px] mb-[3px] h-[17px] shrink-0 pl-0.5 text-[10px] leading-[17px]">替换为：</label>
          <input id="replace" className="h-[15px] shrink-0 border border-r-0 border-[#9a9a9c] bg-white px-1" />
          <div className="shrink-0 pt-[5px]">
            <Choice type="radio" name="scope" text="整个文档" off checked />
            <Choice type="radio" name="scope" text="从当前位置开始" off />
            <Choice type="radio" name="scope" text="选择" off />
          </div>
          <div className="flex shrink-0 gap-[5px] pt-[3px]">
            <button type="button" className={`${pushButton} w-[76px]`}>替换</button>
            <button type="button" className={`${pushButton} w-[76px]`}>全部替换</button>
          </div>
        </form>
        <VScroll before="h-0" thumb="h-[98%]" />
      </div>
      <div className="flex h-[15px] shrink-0 bg-[#c6c6c8]">
        <div className="min-w-0 flex-1"><HScroll thumb="w-[82%]" /></div>
        <div className="w-[15px]" />
      </div>
      <div className="flex h-3 shrink-0 items-start overflow-hidden border-t border-[#77787c] bg-[#e0e0e2]">
        <button type="button" aria-label="展开语言和资源" className="flex w-[17px] justify-center pt-1"><Icon name="chevR" className="size-2.5" /></button>
        <h3 className="pl-[3px] text-[12px] leading-[20px] font-bold">语言和资源</h3>
      </div>
    </aside>
  );
}

export default function App() {
  return (
    <div className="flex h-screen flex-col overflow-hidden bg-[#cccccc] font-['Noto_Sans','Noto_Sans_CJK_SC',sans-serif] text-[11px] leading-[14px] text-[#1c1c1c]">
      <div className="flex h-5 shrink-0 items-center border-t-4 border-[#7d7d7b] bg-[#1c1d1b] pr-1 pl-1 text-[#e8e8e8]">
        <Icon name="logo" className="size-4" />
        <div className="flex min-w-0 flex-1 items-center pl-1 text-[10px] font-semibold whitespace-nowrap">
          <span>Siemens&nbsp;&nbsp; -&nbsp;&nbsp; C:\Users\wtf98\Desktop\</span><span className="text-[13px] font-bold">苏信系统\苏信系统</span>
        </div>
        <div className="flex gap-1">
          <button type="button" aria-label="最小化"><Icon name="min" className="size-2.5" /></button>
          <button type="button" aria-label="还原"><Icon name="restore" className="size-2.5" /></button>
          <button type="button" aria-label="关闭"><Icon name="close" className="size-2.5" /></button>
        </div>
      </div>
      <Header />
      <div className="flex min-h-0 flex-1">
        <div className="flex w-5 shrink-0 flex-col bg-[#aaa8ab]">
          <button type="button" className="flex h-[207px] items-center justify-center border-b border-[#d5d5d7] pt-6 text-[12px] font-bold text-[#efefef]">
            <span className="rotate-180 [writing-mode:vertical-rl] [text-orientation:sideways]">PLC 编程</span>
          </button>
        </div>
        <ProjectTree />
        <Editor />
        <Tasks />
        <nav className="flex w-5 shrink-0 flex-col gap-1 bg-[#afadb0] pt-[25px] pr-1">
          <button type="button" className="flex h-[62px] flex-col items-center gap-1 bg-[#ececee] pt-0.5 text-[12px] font-bold">
            <Icon name="taskList" /><span className="[writing-mode:vertical-rl] [text-orientation:sideways]">任务</span>
          </button>
          <button type="button" className="flex h-[47px] flex-col items-center gap-1 border border-[#98989a] bg-[#cfcfd1] pt-0.5 text-[12px] text-[#444]">
            <Icon name="book" /><span className="[writing-mode:vertical-rl] [text-orientation:sideways]">库</span>
          </button>
        </nav>
      </div>
    </div>
  );
}
